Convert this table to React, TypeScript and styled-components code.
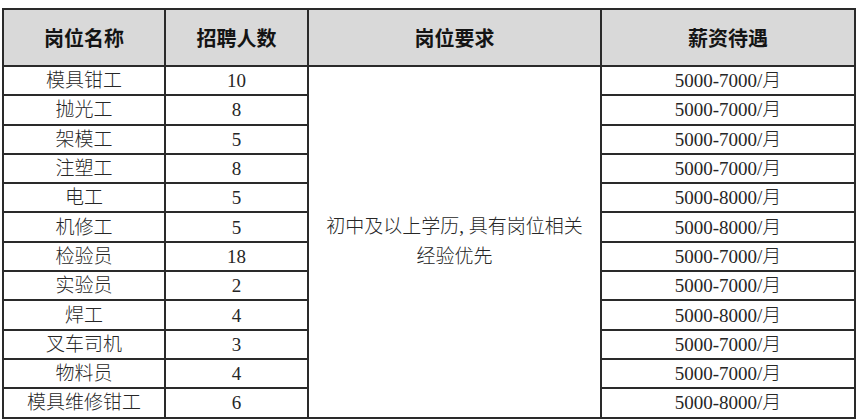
import React from 'react';
import styled, {createGlobalStyle} from 'styled-components';

const GlobalStyle = createGlobalStyle`
  html, body {
    margin: 0;
    padding: 0;
    background: #ffffff;
  }
`;

const Page = styled.div`
  padding: 8px 0 0 2px;
`;

const Table = styled.table`
  width: 854px;
  table-layout: fixed;
  border-collapse: collapse;
  border: 2px solid #222222;
`;

const Col = styled.col<{$width: number}>`
  width: ${(p) => p.$width}px;
`;

const HeadCell = styled.th`
  height: 55px;
  padding: 0;
  background: #d9d9d9;
  border: 2px solid #2a2a2a;
  font-family: 'Noto Sans CJK SC', 'Noto Sans', sans-serif;
  font-size: 20px;
  font-weight: 700;
  color: #141414;
  text-align: center;
  vertical-align: middle;
`;

const Cell = styled.td`
  height: 27.3px;
  padding: 0;
  border: 2px solid #2a2a2a;
  font-family: 'Liberation Serif', 'Noto Sans CJK SC', serif;
  font-size: 19px;
  font-weight: 300;
  color: #262626;
  text-align: center;
  vertical-align: middle;
  line-height: 27px;
  white-space: nowrap;
`;

const NoteCell = styled(Cell)`
  white-space: normal;
  line-height: 30px;
  padding: 0 14px;
`;

const jobs = [
  {name: '模具钳工', count: '10', pay: '5000-7000/月'},
  {name: '抛光工', count: '8', pay: '5000-7000/月'},
  {name: '架模工', count: '5', pay: '5000-7000/月'},
  {name: '注塑工', count: '8', pay: '5000-7000/月'},
  {name: '电工', count: '5', pay: '5000-8000/月'},
  {name: '机修工', count: '5', pay: '5000-8000/月'},
  {name: '检验员', count: '18', pay: '5000-7000/月'},
  {name: '实验员', count: '2', pay: '5000-7000/月'},
  {name: '焊工', count: '4', pay: '5000-8000/月'},
  {name: '叉车司机', count: '3', pay: '5000-7000/月'},
  {name: '物料员', count: '4', pay: '5000-7000/月'},
  {name: '模具维修钳工', count: '6', pay: '5000-8000/月'},
];

export default function App() {
  return (
    <Page>
      <GlobalStyle />
      <Table>
        <colgroup>
          <Col $width={162} />
          <Col $width={143} />
          <Col $width={293} />
          <Col $width={254} />
        </colgroup>
        <thead>
          <tr>
            <HeadCell>岗位名称</HeadCell>
            <HeadCell>招聘人数</HeadCell>
            <HeadCell>岗位要求</HeadCell>
            <HeadCell>薪资待遇</HeadCell>
          </tr>
        </thead>
        <tbody>
          {jobs.map((job, i) => (
            <tr key={job.name}>
              <Cell>{job.name}</Cell>
              <Cell>{job.count}</Cell>
              {i === 0 && (
                <NoteCell rowSpan={jobs.length}>
                  初中及以上学历, 具有岗位相关经验优先
                </NoteCell>
              )}
              <Cell>{job.pay}</Cell>
            </tr>
          ))}
        </tbody>
      </Table>
    </Page>
  );
}
